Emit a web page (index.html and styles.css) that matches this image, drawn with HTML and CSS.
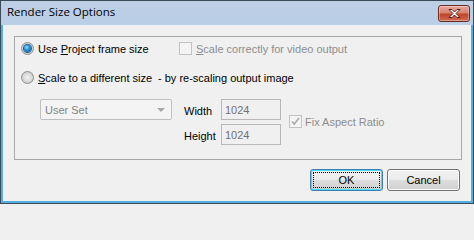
FILE: index.html
```html
<!DOCTYPE html>
<html>
<head>
<meta charset="utf-8">
<link rel="stylesheet" href="styles.css">
</head>
<body>
<div class="window">
  <div class="titlebar">
    <span class="title">Render Size Options</span>
    <span class="close">
      <svg width="15" height="11" viewBox="0 0 15 11">
        <path d="M2 1.5 L5 1.5 L7.5 4 L10 1.5 L13 1.5 L9 5.5 L13 9.5 L10 9.5 L7.5 7 L5 9.5 L2 9.5 L6 5.5 Z" fill="#ffffff" stroke="#5a2118" stroke-width="1" stroke-linejoin="round"/>
      </svg>
    </span>
  </div>
  <div class="client">
    <div class="group">
      <div class="row row1">
        <label class="opt opt1"><span class="radio on"></span><span class="txt">Use <u>P</u>roject frame size</span></label>
        <label class="chk dis"><span class="box"></span><span class="txt"><u>S</u>cale correctly for video output</span></label>
      </div>
      <div class="row row2">
        <label class="opt opt2"><span class="radio"></span><span class="txt"><u>S</u>cale to a different size</span></label>
        <span class="hint">- by re-scaling output image</span>
      </div>
      <div class="sizes">
        <div class="combo"><span class="combo-text">User Set</span><span class="arrow"></span></div>
        <div class="fields">
          <span class="flabel">Width</span><span class="field">1024</span>
          <span class="flabel">Height</span><span class="field">1024</span>
        </div>
        <label class="chk dis fix"><span class="box checked"><svg width="11" height="11" viewBox="0 0 11 11"><path d="M2 5.5 L4.3 8 L9 2" fill="none" stroke="#a8a8a8" stroke-width="1.6"/></svg></span><span class="txt">Fix Aspect Ratio</span></label>
      </div>
    </div>
    <div class="buttons">
      <span class="btn default"><span class="focus">OK</span></span>
      <span class="btn">Cancel</span>
    </div>
  </div>
</div>
</body>
</html>
```
FILE: styles.css
```css
* { box-sizing: border-box; }
html, body { margin: 0; padding: 0; background: #f0f0f0; }
body { font-family: "Liberation Sans", Arial, sans-serif; font-size: 11px; color: #000; }

.window {
  width: 474px; height: 204px;
  border: 1px solid #3a4a58;
  background: linear-gradient(#bccfe5, #aac6e6);
  display: flex; flex-direction: column;
}
.titlebar {
  height: 24px; flex: none;
  display: flex; align-items: flex-start; justify-content: space-between;
  padding: 0 3px 0 6px;
}
.title {
  font-family: "Open Sans", "Noto Sans", sans-serif;
  font-size: 11.5px; color: #000; line-height: 24px; margin-top: -1px;
}
.close {
  margin-top: 4px;
  width: 32px; height: 17px;
  border: 1px solid #6b2a20;
  border-radius: 3px;
  background: linear-gradient(#e8a79c 0%, #d7826f 45%, #c2442d 55%, #cf6a4e 100%);
  box-shadow: inset 0 0 0 1px rgba(255,255,255,0.35);
  display: flex; align-items: center; justify-content: center;
}
.close svg { display: block; }

.client {
  flex: 1;
  background: #f0f0f0;
  border: 2px solid #55aee0;
  border-top: none;
  padding: 11px 0 0 0;
}

.group {
  margin-left: 11px;
  width: 448px; height: 124px;
  border: 1px solid #a8a8a8;
  padding: 5px 0 0 6px;
}
.row { display: flex; align-items: center; height: 13px; }
.row2 { margin-top: 16px; }
.opt, .chk { display: flex; align-items: center; white-space: nowrap; }
.txt { white-space: pre; }
.opt1 { width: 158px; }
.opt2 { width: 137px; }

.radio {
  width: 13px; height: 13px; flex: none;
  border-radius: 50%;
  border: 1px solid #8e8f8f;
  background: radial-gradient(circle at 50% 50%, #f3f3f3 0%, #d5d5d5 60%, #bcbcbc 100%);
  margin-right: 4px;
  display: flex; align-items: center; justify-content: center;
}
.radio.on::after {
  content: ""; width: 7px; height: 7px; border-radius: 50%;
  background: radial-gradient(circle at 40% 35%, #8fe0ff 0%, #1f8ad3 45%, #0b4f91 100%);
  box-shadow: 0 0 0 1px #1a5f98;
}

.chk .box {
  width: 13px; height: 13px; flex: none;
  border: 1px solid #c2c2c2;
  background: #f4f4f4;
  margin-right: 4px;
  display: flex; align-items: center; justify-content: center;
}
.chk.dis { color: #8d8d8d; }
.hint { white-space: nowrap; }

.sizes {
  display: flex; align-items: flex-start;
  margin-top: 15px; margin-left: 19px;
}
.combo {
  width: 132px; height: 21px;
  border: 1px solid #bfbfbf; border-radius: 2px;
  background: #f4f4f4;
  color: #848484;
  display: flex; align-items: center; justify-content: space-between;
  padding: 0 6px 0 4px;
}
.arrow {
  width: 0; height: 0;
  border-left: 4px solid transparent; border-right: 4px solid transparent;
  border-top: 4px solid #a6a6a6;
}
.fields {
  margin-left: 12px;
  display: grid; grid-template-columns: 37px 60px; row-gap: 4px;
  align-items: center;
}
.flabel { padding-top: 3px; }
.field {
  height: 21px;
  border: 1px solid #b7b7b7;
  background: #f0f0f0;
  color: #707070;
  padding: 3px 0 0 3px;
  line-height: 14px;
}
.fix { margin-left: 8px; margin-top: 16px; }
.fix .box { margin-right: 3px; }

.buttons {
  display: flex; justify-content: flex-end; gap: 4px;
  margin-top: 9px; margin-right: 11px;
}
.btn {
  width: 73px; height: 22px;
  border: 1px solid #707070; border-radius: 3px;
  background: linear-gradient(#f2f2f2 0%, #ebebeb 48%, #dddddd 52%, #cfcfcf 100%);
  box-shadow: inset 0 0 0 1px #fcfcfc;
  display: flex; align-items: center; justify-content: center;
}
.btn.default {
  border-color: #3c7fb1;
  box-shadow: inset 0 0 0 1px #48d8fb;
  padding: 2px;
}
.focus {
  width: 100%; height: 100%;
  border: 1px dotted #000;
  display: flex; align-items: center; justify-content: center;
}
```
